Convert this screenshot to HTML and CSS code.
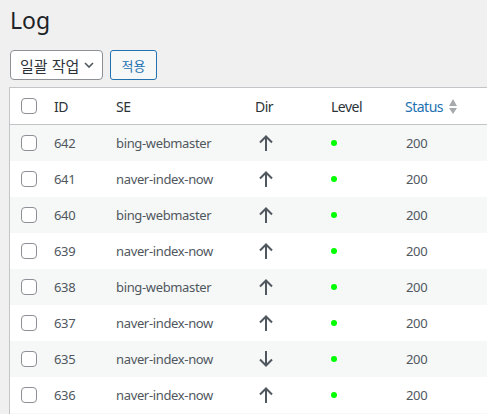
FILE: index.html
```html
<!DOCTYPE html>
<html lang="ko">
<head>
<meta charset="utf-8">
<title>Log</title>
<link rel="stylesheet" href="styles.css">
</head>
<body>
<div class="wrap">
  <h1 class="title">Log</h1>
  <div class="actions">
    <div class="select">
      <span>일괄 작업</span>
      <svg class="chev" width="10" height="6" viewBox="0 0 10 6"><path d="M1 1l4 4 4-4" fill="none" stroke="#50575e" stroke-width="1.6"/></svg>
    </div>
    <div class="btn">적용</div>
  </div>
  <div class="table">
    <div class="row head">
      <div class="c cb"><span class="box"></span></div>
      <div class="c">ID</div>
      <div class="c">SE</div>
      <div class="c">Dir</div>
      <div class="c">Level</div>
      <div class="c status">Status
        <svg class="sort" width="10" height="16" viewBox="0 0 10 16"><path d="M1 8L5 1 9 8Z M1 10L5 16 9 10Z" fill="#a7aaad"/></svg>
      </div>
    </div>

    <div class="row alt">
      <div class="c cb"><span class="box"></span></div>
      <div class="c">642</div><div class="c">bing-webmaster</div>
      <div class="c"><svg class="arr" width="14" height="16" viewBox="0 0 14 16"><path d="M7 1V16M1 7.5L7 1.5 13 7.5" fill="none" stroke="#50575e" stroke-width="2"/></svg></div>
      <div class="c"><span class="dot"></span></div><div class="c num">200</div>
    </div>
    <div class="row">
      <div class="c cb"><span class="box"></span></div>
      <div class="c">641</div><div class="c">naver-index-now</div>
      <div class="c"><svg class="arr" width="14" height="16" viewBox="0 0 14 16"><path d="M7 1V16M1 7.5L7 1.5 13 7.5" fill="none" stroke="#50575e" stroke-width="2"/></svg></div>
      <div class="c"><span class="dot"></span></div><div class="c num">200</div>
    </div>
    <div class="row alt">
      <div class="c cb"><span class="box"></span></div>
      <div class="c">640</div><div class="c">bing-webmaster</div>
      <div class="c"><svg class="arr" width="14" height="16" viewBox="0 0 14 16"><path d="M7 1V16M1 7.5L7 1.5 13 7.5" fill="none" stroke="#50575e" stroke-width="2"/></svg></div>
      <div class="c"><span class="dot"></span></div><div class="c num">200</div>
    </div>
    <div class="row">
      <div class="c cb"><span class="box"></span></div>
      <div class="c">639</div><div class="c">naver-index-now</div>
      <div class="c"><svg class="arr" width="14" height="16" viewBox="0 0 14 16"><path d="M7 1V16M1 7.5L7 1.5 13 7.5" fill="none" stroke="#50575e" stroke-width="2"/></svg></div>
      <div class="c"><span class="dot"></span></div><div class="c num">200</div>
    </div>
    <div class="row alt">
      <div class="c cb"><span class="box"></span></div>
      <div class="c">638</div><div class="c">bing-webmaster</div>
      <div class="c"><svg class="arr" width="14" height="16" viewBox="0 0 14 16"><path d="M7 1V16M1 7.5L7 1.5 13 7.5" fill="none" stroke="#50575e" stroke-width="2"/></svg></div>
      <div class="c"><span class="dot"></span></div><div class="c num">200</div>
    </div>
    <div class="row">
      <div class="c cb"><span class="box"></span></div>
      <div class="c">637</div><div class="c">naver-index-now</div>
      <div class="c"><svg class="arr" width="14" height="16" viewBox="0 0 14 16"><path d="M7 1V16M1 7.5L7 1.5 13 7.5" fill="none" stroke="#50575e" stroke-width="2"/></svg></div>
      <div class="c"><span class="dot"></span></div><div class="c num">200</div>
    </div>
    <div class="row alt">
      <div class="c cb"><span class="box"></span></div>
      <div class="c">635</div><div class="c">naver-index-now</div>
      <div class="c"><svg class="arr" width="14" height="16" viewBox="0 0 14 16"><path d="M7 0V15M1 8.5L7 14.5 13 8.5" fill="none" stroke="#50575e" stroke-width="2"/></svg></div>
      <div class="c"><span class="dot"></span></div><div class="c num">200</div>
    </div>
    <div class="row">
      <div class="c cb"><span class="box"></span></div>
      <div class="c">636</div><div class="c">naver-index-now</div>
      <div class="c"><svg class="arr" width="14" height="16" viewBox="0 0 14 16"><path d="M7 1V16M1 7.5L7 1.5 13 7.5" fill="none" stroke="#50575e" stroke-width="2"/></svg></div>
      <div class="c"><span class="dot"></span></div><div class="c num">200</div>
    </div>
    <div class="row alt"></div>
  </div>
</div>
</body>
</html>
```

FILE: styles.css
```css
html, body {
  margin: 0;
  padding: 0;
  background: #f0f0f1;
  overflow: hidden;
  height: 414px;
}
body {
  font-family: "Noto Sans", "Noto Sans CJK KR", sans-serif;
  color: #2c3338;
}
.wrap {
  padding: 5px 0 0 9px;
}
.title {
  margin: 0 0 0 1px;
  font-size: 23px;
  font-weight: 400;
  line-height: 31px;
  color: #1d2327;
}
.actions {
  display: flex;
  gap: 7px;
  margin: 14px 0 0 1px;
  height: 30px;
}
.select {
  box-sizing: border-box;
  width: 93px;
  height: 30px;
  border: 1px solid #8c8f94;
  border-radius: 4px;
  background: #fff;
  display: flex;
  align-items: center;
  justify-content: space-between;
  padding: 0 8px 0 9px;
  font-family: "Noto Sans CJK KR", sans-serif;
  font-size: 15px;
  color: #2c3338;
}
.chev {
  display: block;
}
.btn {
  box-sizing: border-box;
  width: 47px;
  height: 30px;
  border: 1px solid #2271b1;
  border-radius: 3px;
  background: #f6f7f7;
  color: #2271b1;
  font-family: "Noto Sans CJK KR", sans-serif;
  font-size: 13px;
  display: flex;
  align-items: center;
  justify-content: center;
}
.table {
  margin-top: 7px;
  width: 520px;
  border: 1px solid #c3c4c7;
  background: #fff;
}
.row {
  display: grid;
  grid-template-columns: 34px 62px 139px 76px 74px 1fr;
  height: 36px;
  font-size: 13px;
  letter-spacing: -0.35px;
  color: #50575e;
}
.row.alt {
  background: #f6f7f7;
}
.row.head {
  height: 36px;
  border-bottom: 1px solid #c3c4c7;
  font-size: 14px;
  letter-spacing: -0.5px;
  color: #2c3338;
}
.c {
  display: flex;
  align-items: center;
  padding-left: 10px;
  white-space: nowrap;
}
.c.cb {
  padding-left: 11px;
}
.box {
  box-sizing: border-box;
  width: 16px;
  height: 16px;
  border: 1px solid #8c8f94;
  border-radius: 4px;
  background: #fff;
}
.status {
  color: #2271b1;
  gap: 5px;
}
.sort {
  display: block;
}
.arr {
  display: block;
  margin-left: 4px;
}
.dot {
  width: 6px;
  height: 6px;
  border-radius: 50%;
  background: #00ff00;
}
.num {
  padding-left: 11px;
}
```
